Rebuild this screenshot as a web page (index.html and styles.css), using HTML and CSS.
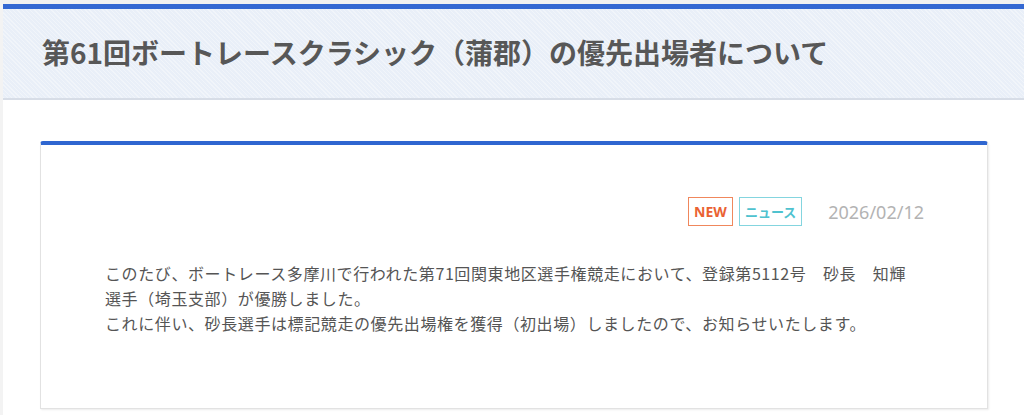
FILE: index.html
```html
<!DOCTYPE html>
<html lang="ja">
<head>
<meta charset="utf-8">
<title>第61回ボートレースクラシック（蒲郡）の優先出場者について</title>
<link rel="stylesheet" href="styles.css">
</head>
<body>
<div class="site">
  <header class="page-head">
    <h1 class="page-title">第61回ボートレースクラシック（蒲郡）の優先出場者について</h1>
  </header>
  <article class="card">
    <div class="meta">
      <span class="tag tag-new">NEW</span>
      <span class="tag tag-news">ニュース</span>
      <time class="date">2026/02/12</time>
    </div>
    <div class="body">
      <p>このたび、ボートレース多摩川で行われた第71回関東地区選手権競走において、登録第5112号　砂長　知輝選手（埼玉支部）が優勝しました。<br>これに伴い、砂長選手は標記競走の優先出場権を獲得（初出場）しましたので、お知らせいたします。</p>
    </div>
  </article>
</div>
</body>
</html>
```

FILE: styles.css
```css
html, body {
  margin: 0;
  padding: 0;
  background: #ffffff;
}
body {
  font-family: "Noto Sans CJK JP", "Noto Sans", sans-serif;
  color: #555555;
}
.site {
  min-height: 415px;
  box-sizing: border-box;
  border-top: 4px solid #f1f1f1;
  border-left: 3px solid #f3f3f3;
}
.page-head {
  border-top: 5px solid #3468d2;
  background-color: #e9eff8;
  background-image: repeating-linear-gradient(45deg, rgba(255,255,255,0.35) 0 1px, transparent 1px 3px);
  height: 96px;
  box-sizing: border-box;
  border-bottom: 2px solid #d7dde7;
  display: flex;
  align-items: center;
  padding: 0 0 0 39px;
}
.page-title {
  margin: 0;
  font-size: 28px;
  font-weight: 700;
  color: #575757;
  line-height: 1.2;
  padding-bottom: 2px;
}
.card {
  margin: 41px 36px 0 37px;
  border: 1px solid #e2e2e2;
  border-top: 4px solid #2f66d0;
  border-radius: 3px 3px 0 0;
  box-shadow: 1px 1px 2px rgba(0,0,0,0.08);
  padding: 52px 63px 72px 64px;
  background: #fff;
}
.meta {
  display: flex;
  justify-content: flex-end;
  align-items: center;
  height: 29px;
}
.tag {
  box-sizing: border-box;
  height: 29px;
  display: inline-flex;
  align-items: center;
  justify-content: center;
  font-weight: 700;
  font-size: 14px;
  padding: 0 5px;
  white-space: nowrap;
}
.tag-new {
  border: 1px solid #f0875c;
  color: #ea6233;
  font-family: "Noto Sans", sans-serif;
}
.tag-news {
  border: 1px solid #84d5df;
  color: #4fc2cf;
  margin-left: 6px;
  font-size: 13px;
}
.date {
  margin-left: 26px;
  font-size: 18px;
  color: #b3b3b3;
  font-family: "Noto Sans", sans-serif;
}
.body {
  margin-top: 35px;
  padding-right: 12px;
}
.body p {
  margin: 0;
  font-size: 16px;
  line-height: 25px;
  letter-spacing: 0.6px;
  color: #555;
}
```
